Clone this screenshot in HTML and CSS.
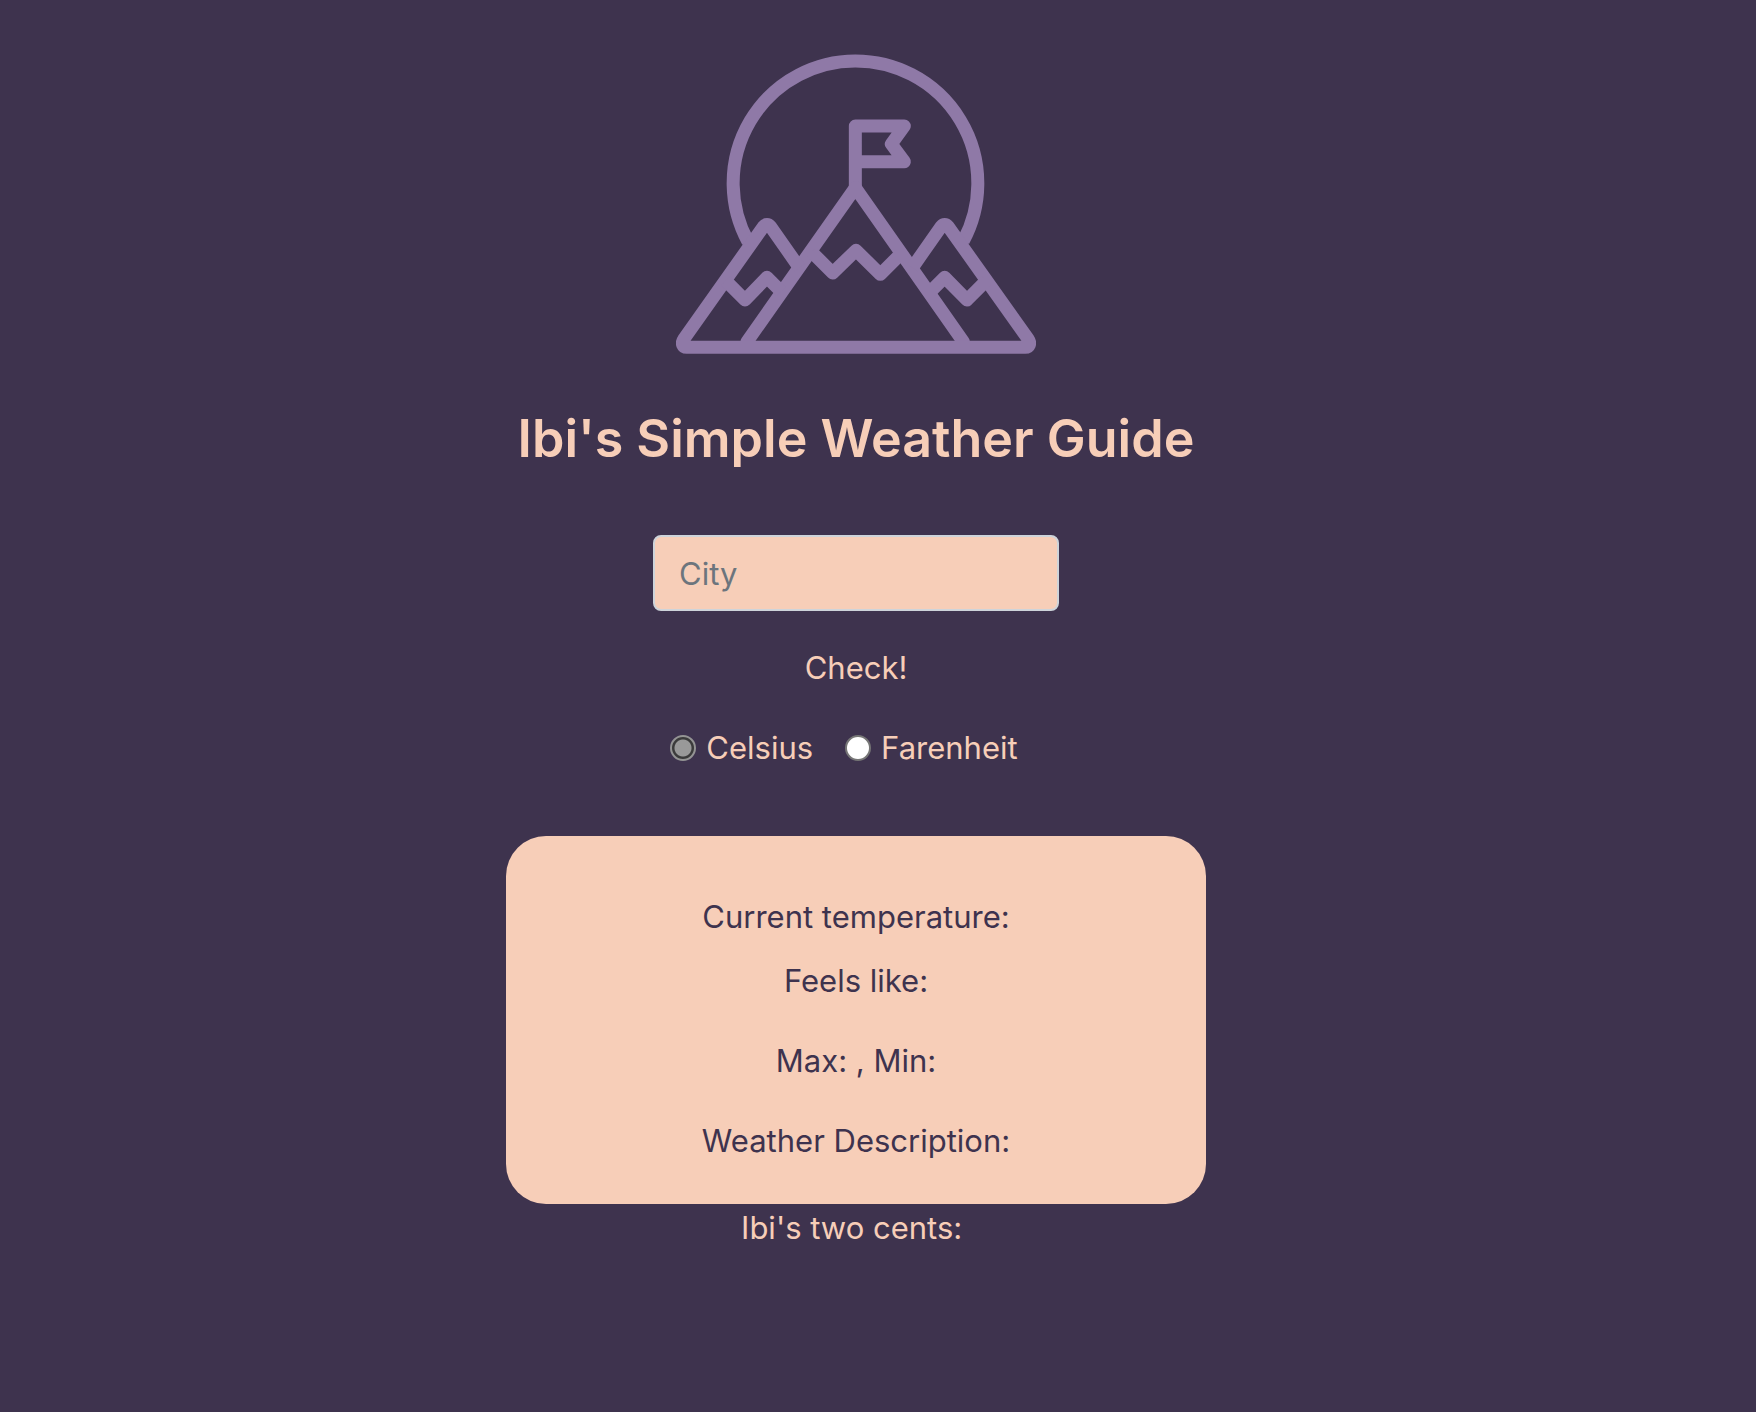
FILE: index.html
```html
<!DOCTYPE html>
<html lang="en">
<head>
<meta charset="utf-8">
<meta name="viewport" content="width=device-width, initial-scale=1">
<title>Ibi's Simple Weather Guide</title>
<link rel="stylesheet" href="styles.css">
</head>
<body>
<main class="page">
  <svg class="logo" viewBox="48 42 1080 900" role="img" aria-label="Mountains with a flag">
    <g fill="none" stroke="currentColor" stroke-width="39" stroke-linejoin="round">
      <path d="M264 605A367 367 0 1 1 910 603"/>
      <path d="M586 443V258H733L694 312L733 365H586"/>
      <path stroke-linecap="round" d="M261 905L586 443L910 905"/>
      <path d="M455 636L518 699L588 631L661 703L721 643"/>
      <path d="M418 683L332 560Q321 547 310 560L71 898C63 910 68 922 80 922H1096C1108 922 1113 910 1105 898L865 560Q854 547 843 560L757 683"/>
      <path d="M197 722L255 780L321 712L363 754"/>
      <path d="M812 754L854 712L921 780L979 722"/>
    </g>
  </svg>
  <h1 class="title">Ibi's Simple Weather Guide</h1>
  <form class="search">
    <input class="city" type="text" placeholder="City" aria-label="City">
    <button class="check" type="button">Check!</button>
    <div class="units">
      <label class="unit"><input class="radio" type="radio" name="unit" checked>Celsius</label>
      <label class="unit"><input class="radio" type="radio" name="unit">Farenheit</label>
    </div>
  </form>
  <section class="card">
    <p class="current">Current temperature:</p>
    <p>Feels like:</p>
    <p>Max: , Min:</p>
    <p>Weather Description:</p>
  </section>
  <p class="advice">Ibi's two cents:&nbsp;</p>
</main>
</body>
</html>
```
FILE: styles.css
```css
* {
  box-sizing: border-box;
}

body {
  margin: 0;
  background: #3e334e;
  color: #f7ceb8;
  font: 400 31px/48px Inter, "Liberation Sans", sans-serif;
}

p {
  margin: 0;
}

.page {
  display: flex;
  flex-direction: column;
  align-items: center;
  padding: 54px 44px 48px 0;
  text-align: center;
}

.logo {
  width: 360px;
  height: 300px;
  color: #8f79a7;
}

.title {
  margin: 51px 0 62px;
  font-size: 52px;
  font-weight: 600;
  line-height: 68px;
}

.search {
  display: flex;
  flex-direction: column;
  align-items: center;
}

.city {
  width: 406px;
  height: 76px;
  padding: 12px 24px;
  border: 2px solid #ced4da;
  border-radius: 8px;
  background: #f7ceb8;
  color: #3e334e;
  font: inherit;
}

.city::placeholder {
  color: #6c757d;
  opacity: 1;
}

.check {
  margin: 33px 0 32px;
  padding: 0;
  border: 0;
  background: none;
  color: inherit;
  font: inherit;
}

.units {
  display: flex;
  gap: 32px;
  padding-right: 24px;
}

.unit {
  display: flex;
  align-items: center;
  gap: 10px;
}

.radio {
  appearance: none;
  width: 26px;
  height: 26px;
  margin: 0;
  border: 2px solid #767676;
  border-radius: 50%;
  background: #fff;
}

.radio:checked {
  border-color: #949494;
  background: radial-gradient(circle, #999 8px, #3b3b3b 9px);
}

.card {
  display: flex;
  flex-direction: column;
  gap: 32px;
  width: 100%;
  max-width: 700px;
  margin-top: 64px;
  padding: 57px 24px 39px;
  border-radius: 40px;
  background: #f7ceb8;
  color: #3e334e;
}

.current {
  margin-bottom: -16px;
}
```
